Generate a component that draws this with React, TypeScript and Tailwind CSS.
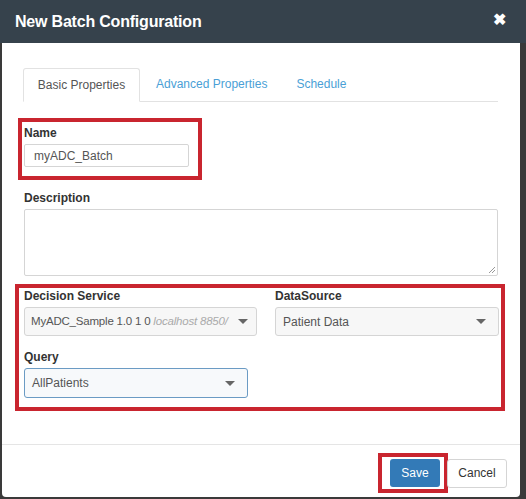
import React from 'react';

const Caret: React.FC = () => (
  <span className="ml-auto shrink-0 h-0 w-0 border-x-[5px] border-t-[5px] border-x-transparent border-t-[#666]" />
);

const App: React.FC = () => {
  return (
    <div
      className="w-[526px] h-[499px] bg-[#3a3a3a] pl-[2px] pr-[6px] pb-[2px] flex flex-col overflow-hidden"
      style={{ fontFamily: '"Liberation Sans", Arial, sans-serif' }}
    >
      {/* header */}
      <div className="shrink-0 -ml-[2px] -mr-[6px] h-[43px] bg-[#36424c] flex items-center pl-[15px] pr-[20px]">
        <span className="text-white font-bold text-[16px] tracking-[-0.2px]">New Batch Configuration</span>
        <span className="ml-auto -mt-[3px] text-white font-bold text-[16px] leading-none">&#10006;</span>
      </div>

      <div className="flex-1 bg-white rounded-b-[4px] flex flex-col">
        {/* tabs */}
        <div className="pt-[24px] pl-[21px] pr-[22px]">
          <div className="flex items-end border-b border-[#e2e2e2] text-[12px]">
            <div className="h-[34px] w-[117px] -mb-px border border-[#e2e2e2] border-b-white bg-white rounded-t-[3px] flex items-center justify-center text-[#555]">
              Basic Properties
            </div>
            <div className="h-[34px] flex items-center pl-[16px] text-[#4a9fd6]">Advanced Properties</div>
            <div className="h-[34px] flex items-center pl-[29px] text-[#4a9fd6]">Schedule</div>
          </div>
        </div>

        {/* name */}
        <div className="pl-[16px] pt-[16px]">
          <div className="w-[184px] border-[4px] border-[#c9252f] pl-[2px] pt-[4px] pb-[9px]">
            <div className="text-[12px] font-bold text-[#333] leading-[14px]">Name</div>
            <div className="mt-[4px] w-[165px] h-[23px] border border-[#d5d5d5] rounded-[2px] flex items-center pl-[9px] text-[12px] text-[#555]">
              myADC_Batch
            </div>
          </div>
        </div>

        {/* description */}
        <div className="pl-[22px] pr-[22px] pt-[11px]">
          <div className="text-[12px] font-bold text-[#333] leading-[14px]">Description</div>
          <div className="mt-[4px] h-[67px] border border-[#d5d5d5] rounded-[2px] relative">
            <svg className="absolute right-[1px] bottom-[1px]" width="8" height="8" viewBox="0 0 8 8">
              <path d="M7 1L1 7M7 4L4 7" stroke="#999" strokeWidth="1" />
            </svg>
          </div>
        </div>

        {/* decision service block */}
        <div className="pl-[13px] pr-[15px] pt-[8px]">
          <div className="border-[4px] border-[#c9252f] pl-[5px] pr-[2px] pt-[1px] pb-[9px]">
            <div className="grid grid-cols-[233px_224px] gap-x-[18px]">
              <div>
                <div className="text-[12px] font-bold text-[#333] leading-[14px]">Decision Service</div>
                <div className="mt-[4px] h-[29px] border border-[#d5d5d5] rounded-[3px] bg-[#f7f7f7] flex items-center pl-[6px] pr-[8px] text-[11.5px] text-[#555] whitespace-nowrap">
                  <span className="tracking-[-0.2px]">MyADC_Sample 1.0 1 0&nbsp;</span>
                  <span className="italic text-[#aaa] tracking-[-0.2px]">localhost 8850/</span>
                  <Caret />
                </div>
              </div>
              <div>
                <div className="text-[12px] font-bold text-[#333] leading-[14px]">DataSource</div>
                <div className="mt-[4px] h-[29px] border border-[#d5d5d5] rounded-[3px] bg-[#f7f7f7] flex items-center pl-[7px] pr-[12px] text-[12px] text-[#555]">
                  <span>Patient Data</span>
                  <Caret />
                </div>
              </div>
            </div>
            <div className="pt-[14px]">
              <div className="text-[12px] font-bold text-[#333] leading-[14px]">Query</div>
              <div className="mt-[4px] w-[224px] h-[30px] border border-[#6b9bc4] rounded-[3px] bg-[#f7f9fb] flex items-center pl-[7px] pr-[12px] text-[12px] text-[#555]">
                <span>AllPatients</span>
                <Caret />
              </div>
            </div>
          </div>
        </div>

        {/* footer */}
        <div className="mt-[33px] border-t border-[#e5e5e5] flex justify-end items-center pr-[13px] pt-[8px]">
          <div className="border-[4px] border-[#c9252f] pl-[8px] pr-[4px] py-[2px]">
            <div className="h-[28px] w-[50px] bg-[#337ab7] rounded-[3px] text-white text-[12px] flex items-center justify-center">
              Save
            </div>
          </div>
          <div className="ml-[-1px] h-[29px] w-[60px] border border-[#d5d5d5] rounded-[3px] text-[#333] text-[12px] flex items-center justify-center">
            Cancel
          </div>
        </div>
      </div>
    </div>
  );
};

export default App;
